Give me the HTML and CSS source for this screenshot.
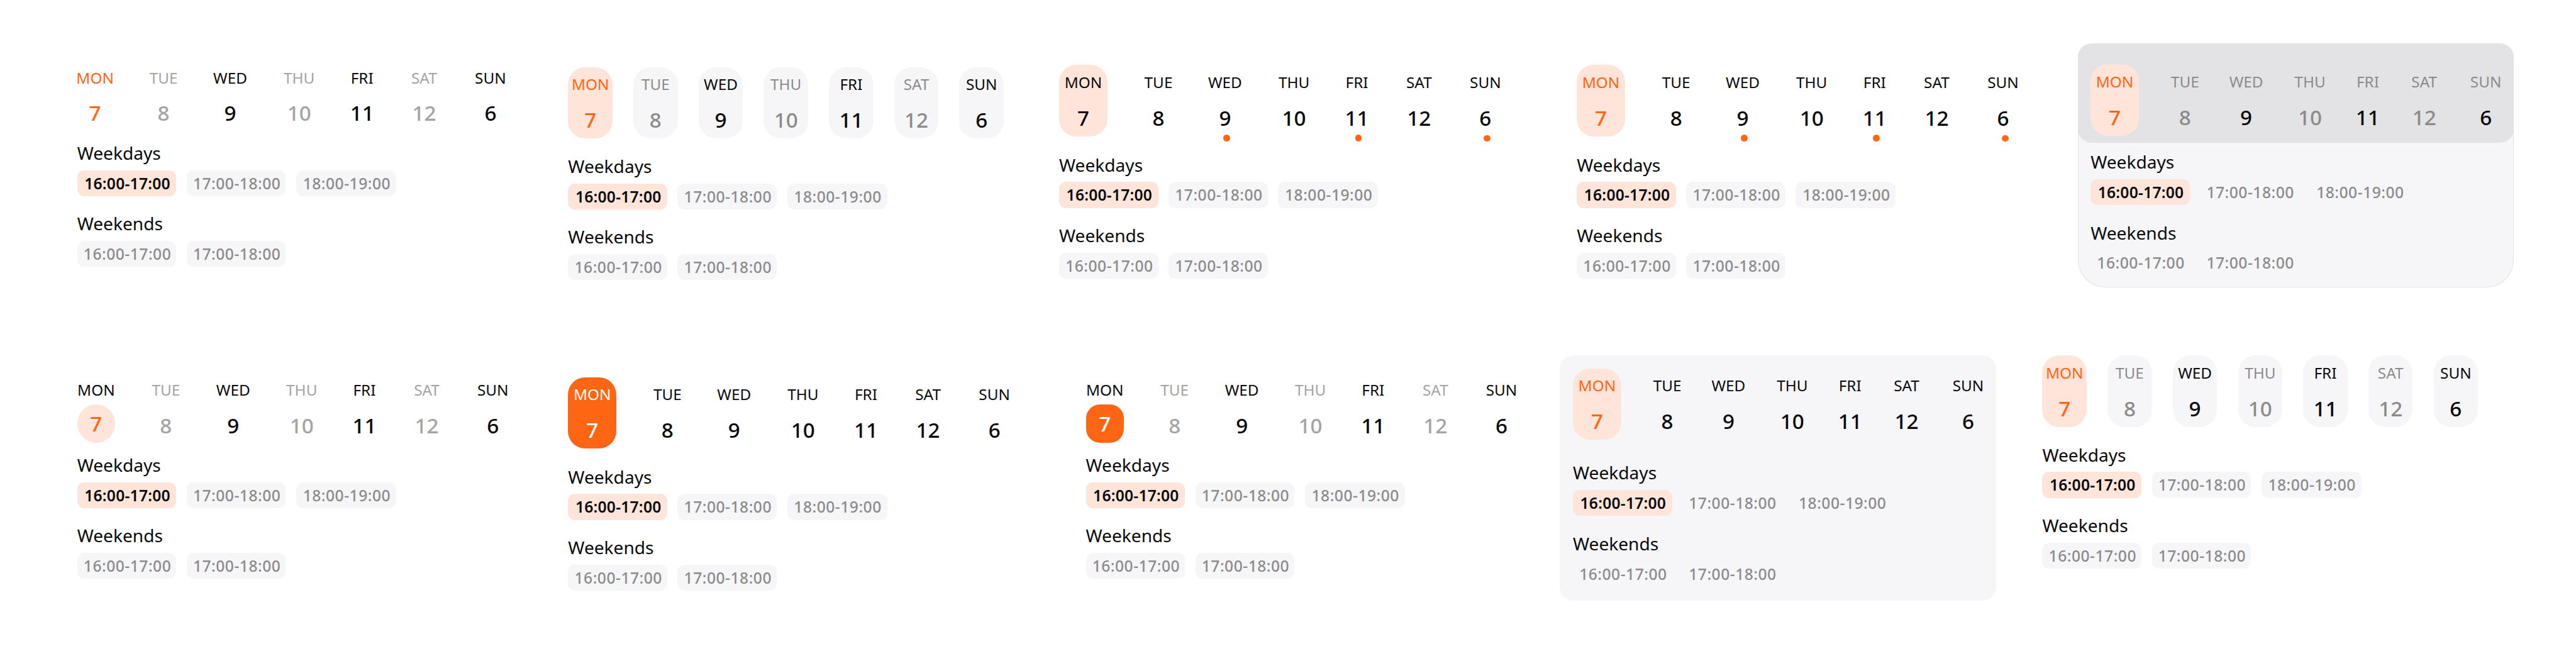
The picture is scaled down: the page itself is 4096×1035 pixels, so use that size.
FILE: index.html
```html
<!DOCTYPE html>
<html lang="en">
<head>
<meta charset="utf-8">
<title>Week schedule variants</title>
<link rel="stylesheet" href="styles.css">
</head>
<body>
<main class="board">
  <div class="row row-top">

    <section class="schedule plain">
      <div class="days">
        <div class="day today"><span class="name">MON</span><span class="num">7</span></div>
        <div class="day off"><span class="name">TUE</span><span class="num">8</span></div>
        <div class="day"><span class="name">WED</span><span class="num">9</span></div>
        <div class="day off"><span class="name">THU</span><span class="num">10</span></div>
        <div class="day"><span class="name">FRI</span><span class="num">11</span></div>
        <div class="day off"><span class="name">SAT</span><span class="num">12</span></div>
        <div class="day"><span class="name">SUN</span><span class="num">6</span></div>
      </div>
      <div class="slots">
        <h2 class="title">Weekdays</h2>
        <div class="chips"><span class="chip active">16:00-17:00</span><span class="chip">17:00-18:00</span><span class="chip">18:00-19:00</span></div>
        <h2 class="title">Weekends</h2>
        <div class="chips"><span class="chip">16:00-17:00</span><span class="chip">17:00-18:00</span></div>
      </div>
    </section>

    <section class="schedule pills pills-top">
      <div class="days">
        <div class="day today"><span class="name">MON</span><span class="num">7</span></div>
        <div class="day off"><span class="name">TUE</span><span class="num">8</span></div>
        <div class="day"><span class="name">WED</span><span class="num">9</span></div>
        <div class="day off"><span class="name">THU</span><span class="num">10</span></div>
        <div class="day"><span class="name">FRI</span><span class="num">11</span></div>
        <div class="day off"><span class="name">SAT</span><span class="num">12</span></div>
        <div class="day"><span class="name">SUN</span><span class="num">6</span></div>
      </div>
      <div class="slots">
        <h2 class="title">Weekdays</h2>
        <div class="chips"><span class="chip active">16:00-17:00</span><span class="chip">17:00-18:00</span><span class="chip">18:00-19:00</span></div>
        <h2 class="title">Weekends</h2>
        <div class="chips"><span class="chip">16:00-17:00</span><span class="chip">17:00-18:00</span></div>
      </div>
    </section>

    <section class="schedule dots">
      <div class="days">
        <div class="day soft"><span class="name">MON</span><span class="num">7</span></div>
        <div class="day"><span class="name">TUE</span><span class="num">8</span></div>
        <div class="day marked"><span class="name">WED</span><span class="num">9</span></div>
        <div class="day"><span class="name">THU</span><span class="num">10</span></div>
        <div class="day marked"><span class="name">FRI</span><span class="num">11</span></div>
        <div class="day"><span class="name">SAT</span><span class="num">12</span></div>
        <div class="day marked"><span class="name">SUN</span><span class="num">6</span></div>
      </div>
      <div class="slots">
        <h2 class="title">Weekdays</h2>
        <div class="chips"><span class="chip active">16:00-17:00</span><span class="chip">17:00-18:00</span><span class="chip">18:00-19:00</span></div>
        <h2 class="title">Weekends</h2>
        <div class="chips"><span class="chip">16:00-17:00</span><span class="chip">17:00-18:00</span></div>
      </div>
    </section>

    <section class="schedule dots">
      <div class="days">
        <div class="day soft today"><span class="name">MON</span><span class="num">7</span></div>
        <div class="day"><span class="name">TUE</span><span class="num">8</span></div>
        <div class="day marked"><span class="name">WED</span><span class="num">9</span></div>
        <div class="day"><span class="name">THU</span><span class="num">10</span></div>
        <div class="day marked"><span class="name">FRI</span><span class="num">11</span></div>
        <div class="day"><span class="name">SAT</span><span class="num">12</span></div>
        <div class="day marked"><span class="name">SUN</span><span class="num">6</span></div>
      </div>
      <div class="slots">
        <h2 class="title">Weekdays</h2>
        <div class="chips"><span class="chip active">16:00-17:00</span><span class="chip">17:00-18:00</span><span class="chip">18:00-19:00</span></div>
        <h2 class="title">Weekends</h2>
        <div class="chips"><span class="chip">16:00-17:00</span><span class="chip">17:00-18:00</span></div>
      </div>
    </section>

    <section class="schedule card card-split">
      <div class="days">
        <div class="day soft today"><span class="name">MON</span><span class="num">7</span></div>
        <div class="day off"><span class="name">TUE</span><span class="num">8</span></div>
        <div class="day"><span class="name">WED</span><span class="num">9</span></div>
        <div class="day off"><span class="name">THU</span><span class="num">10</span></div>
        <div class="day"><span class="name">FRI</span><span class="num">11</span></div>
        <div class="day off"><span class="name">SAT</span><span class="num">12</span></div>
        <div class="day"><span class="name">SUN</span><span class="num">6</span></div>
      </div>
      <div class="slots">
        <h2 class="title">Weekdays</h2>
        <div class="chips"><span class="chip active">16:00-17:00</span><span class="chip">17:00-18:00</span><span class="chip">18:00-19:00</span></div>
        <h2 class="title">Weekends</h2>
        <div class="chips"><span class="chip">16:00-17:00</span><span class="chip">17:00-18:00</span></div>
      </div>
    </section>
  </div>

  <div class="row row-bottom">

    <section class="schedule badge badge-soft">
      <div class="days">
        <div class="day first"><span class="name">MON</span><span class="num">7</span></div>
        <div class="day off"><span class="name">TUE</span><span class="num">8</span></div>
        <div class="day"><span class="name">WED</span><span class="num">9</span></div>
        <div class="day off"><span class="name">THU</span><span class="num">10</span></div>
        <div class="day"><span class="name">FRI</span><span class="num">11</span></div>
        <div class="day off"><span class="name">SAT</span><span class="num">12</span></div>
        <div class="day"><span class="name">SUN</span><span class="num">6</span></div>
      </div>
      <div class="slots">
        <h2 class="title">Weekdays</h2>
        <div class="chips"><span class="chip active">16:00-17:00</span><span class="chip">17:00-18:00</span><span class="chip">18:00-19:00</span></div>
        <h2 class="title">Weekends</h2>
        <div class="chips"><span class="chip">16:00-17:00</span><span class="chip">17:00-18:00</span></div>
      </div>
    </section>

    <section class="schedule filled">
      <div class="days">
        <div class="day solid"><span class="name">MON</span><span class="num">7</span></div>
        <div class="day"><span class="name">TUE</span><span class="num">8</span></div>
        <div class="day"><span class="name">WED</span><span class="num">9</span></div>
        <div class="day"><span class="name">THU</span><span class="num">10</span></div>
        <div class="day"><span class="name">FRI</span><span class="num">11</span></div>
        <div class="day"><span class="name">SAT</span><span class="num">12</span></div>
        <div class="day"><span class="name">SUN</span><span class="num">6</span></div>
      </div>
      <div class="slots">
        <h2 class="title">Weekdays</h2>
        <div class="chips"><span class="chip active">16:00-17:00</span><span class="chip">17:00-18:00</span><span class="chip">18:00-19:00</span></div>
        <h2 class="title">Weekends</h2>
        <div class="chips"><span class="chip">16:00-17:00</span><span class="chip">17:00-18:00</span></div>
      </div>
    </section>

    <section class="schedule badge badge-solid">
      <div class="days">
        <div class="day first"><span class="name">MON</span><span class="num">7</span></div>
        <div class="day off"><span class="name">TUE</span><span class="num">8</span></div>
        <div class="day"><span class="name">WED</span><span class="num">9</span></div>
        <div class="day off"><span class="name">THU</span><span class="num">10</span></div>
        <div class="day"><span class="name">FRI</span><span class="num">11</span></div>
        <div class="day off"><span class="name">SAT</span><span class="num">12</span></div>
        <div class="day"><span class="name">SUN</span><span class="num">6</span></div>
      </div>
      <div class="slots">
        <h2 class="title">Weekdays</h2>
        <div class="chips"><span class="chip active">16:00-17:00</span><span class="chip">17:00-18:00</span><span class="chip">18:00-19:00</span></div>
        <h2 class="title">Weekends</h2>
        <div class="chips"><span class="chip">16:00-17:00</span><span class="chip">17:00-18:00</span></div>
      </div>
    </section>

    <section class="schedule card card-flat">
      <div class="days">
        <div class="day soft today"><span class="name">MON</span><span class="num">7</span></div>
        <div class="day"><span class="name">TUE</span><span class="num">8</span></div>
        <div class="day"><span class="name">WED</span><span class="num">9</span></div>
        <div class="day"><span class="name">THU</span><span class="num">10</span></div>
        <div class="day"><span class="name">FRI</span><span class="num">11</span></div>
        <div class="day"><span class="name">SAT</span><span class="num">12</span></div>
        <div class="day"><span class="name">SUN</span><span class="num">6</span></div>
      </div>
      <div class="slots">
        <h2 class="title">Weekdays</h2>
        <div class="chips"><span class="chip active">16:00-17:00</span><span class="chip">17:00-18:00</span><span class="chip">18:00-19:00</span></div>
        <h2 class="title">Weekends</h2>
        <div class="chips"><span class="chip">16:00-17:00</span><span class="chip">17:00-18:00</span></div>
      </div>
    </section>

    <section class="schedule pills">
      <div class="days">
        <div class="day today"><span class="name">MON</span><span class="num">7</span></div>
        <div class="day off"><span class="name">TUE</span><span class="num">8</span></div>
        <div class="day"><span class="name">WED</span><span class="num">9</span></div>
        <div class="day off"><span class="name">THU</span><span class="num">10</span></div>
        <div class="day"><span class="name">FRI</span><span class="num">11</span></div>
        <div class="day off"><span class="name">SAT</span><span class="num">12</span></div>
        <div class="day"><span class="name">SUN</span><span class="num">6</span></div>
      </div>
      <div class="slots">
        <h2 class="title">Weekdays</h2>
        <div class="chips"><span class="chip active">16:00-17:00</span><span class="chip">17:00-18:00</span><span class="chip">18:00-19:00</span></div>
        <h2 class="title">Weekends</h2>
        <div class="chips"><span class="chip">16:00-17:00</span><span class="chip">17:00-18:00</span></div>
      </div>
    </section>
  </div>
</main>
</body>
</html>
```

FILE: styles.css
```css
/* The board is 59.76rem wide and scales with the window. */
html {
  font-size: calc(100vw / 59.76);
}

:root {
  --ink: #08090b;
  --orange: #ff6614;
  --peach: #ffe4d9;
  --mist: #f6f6f9;
  --gray: #8b8b8c;
  --gray-light: #a4a4a4;
}

* {
  box-sizing: border-box;
}

body {
  margin: 0;
  background: #fff;
  color: var(--ink);
  font-family: "Noto Sans", "Open Sans", sans-serif;
  overflow: hidden;
}

.board {
  height: 100vh;
}

.row {
  display: grid;
  align-items: start;
  padding-left: 1.79rem;
}

.row-top {
  height: 8.25rem;
  padding-top: 1.01rem;
  grid-template-columns: 11.39rem 11.39rem 12.01rem 11.62rem 10.12rem;
}

.row-bottom {
  grid-template-columns: 11.39rem 12.01rem 11rem 11.19rem 10.12rem;
}

/* Day strip: each track is the distance to the next day's centre */
.days {
  display: grid;
  grid-template-columns: 1.59rem 1.545rem 1.6rem 1.46rem 1.44rem 1.54rem 0.8rem;
}

.day {
  position: relative;
  display: flex;
  flex-direction: column;
  align-items: center;
  gap: 0.341rem;
  width: var(--cell);
  height: 1.66rem;
  padding-top: 0.199rem;
  border-radius: 0.4rem;
}

.name {
  font-size: 0.355rem;
  line-height: 0.4rem;
}

.num {
  font-size: 0.485rem;
  font-weight: 500;
  line-height: 0.56rem;
}

.off {
  color: var(--gray);
}

.today {
  color: var(--orange);
}

.soft {
  background: var(--peach);
}

.solid {
  background: var(--orange);
  color: #fff;
}

/* Time slots */
.title {
  margin: 0 0 0.16rem;
  padding-top: 0.01rem;
  font-size: 0.41rem;
  font-weight: 400;
  line-height: 0.48rem;
}

.chips {
  display: flex;
  gap: 0.24rem;
}

.chips + .title {
  margin-top: 0.39rem;
}

.chip {
  width: 2.3rem;
  height: 0.6rem;
  padding-left: 0.03rem;
  border-radius: 0.16rem;
  background: var(--mist);
  color: var(--gray);
  font-size: 0.36rem;
  font-weight: 500;
  line-height: 0.61rem;
  letter-spacing: 0.007rem;
  text-align: center;
  white-space: nowrap;
}

.chip:nth-child(3) {
  width: 2.32rem;
}

.chip.active {
  background: var(--peach);
  color: var(--ink);
  font-weight: 600;
  letter-spacing: 0.003rem;
}

/* Plain */
.plain {
  --cell: 0.83rem;
  margin-top: 0.39rem;
}

.plain .slots {
  margin-top: 0.24rem;
}

.plain .off,
.badge .off {
  color: var(--gray-light);
}

/* Every day in a pill */
.pills {
  --cell: 1.03rem;
}

.pills-top {
  margin-top: 0.545rem;
}

.pills .days {
  grid-template-columns: repeat(7, 1.513rem);
}

.pills .day {
  background: var(--mist);
}

.pills .today {
  background: var(--peach);
}

.pills .slots {
  margin-top: 0.39rem;
}

/* Dots under days that have events */
.dots {
  --cell: 1.12rem;
  margin-top: 0.5rem;
}

.dots .days,
.filled .days {
  grid-template-columns: 1.745rem 1.545rem 1.6rem 1.46rem 1.44rem 1.54rem 1.12rem;
}

.dots .slots {
  margin-top: 0.404rem;
}

.marked::after {
  content: "";
  position: absolute;
  top: 1.61rem;
  left: 0.515rem;
  width: 0.16rem;
  height: 0.16rem;
  border-radius: 50%;
  background: var(--orange);
}

.marked:last-child::after {
  top: 1.62rem;
  left: 0.525rem;
}

/* Badge behind the number */
.badge {
  --cell: 0.88rem;
  margin-top: 0.395rem;
}

.badge .days {
  grid-template-columns: 1.62rem 1.56rem 1.59rem 1.455rem 1.445rem 1.535rem 0.88rem;
}

.badge .slots {
  margin-top: 0.235rem;
}

.badge .first .num {
  width: 0.88rem;
  margin: -0.2rem 0;
  line-height: 0.88rem;
  text-align: center;
}

.badge-soft .first .num {
  border-radius: 50%;
  background: var(--peach);
  color: var(--orange);
}

.badge-solid .first .num {
  border-radius: 0.32rem;
  background: var(--orange);
  color: #fff;
}

/* Solid pill on the current day */
.filled {
  --cell: 1.12rem;
  margin-top: 0.5rem;
}

.filled .slots {
  margin-top: 0.4rem;
}

/* Cards */
.card {
  --cell: 1.12rem;
  width: 10.12rem;
  border-radius: 0.32rem;
  background: var(--mist);
}

.card .days {
  grid-template-columns: 1.63rem 1.42rem 1.48rem 1.34rem 1.31rem 1.43rem 1.12rem;
}

.card-split {
  height: 5.66rem;
  border-radius: 0.32rem 0.32rem 0.64rem 0.64rem;
  box-shadow: inset 0 0 0 0.015rem #e3e3e5;
}

.card-split .days {
  height: 2.3rem;
  padding: 0.48rem 0 0 0.3rem;
  border-radius: 0.32rem;
  background: #e3e3e5;
}

.card-split .day:not(.today) .name {
  color: var(--gray);
}

.card-split .slots {
  padding: 0.2rem 0.3rem 0;
}

.card-flat {
  height: 5.68rem;
  padding: 0.295rem 0.3rem 0;
}

.card-flat .slots {
  margin-top: 0.515rem;
}
```
